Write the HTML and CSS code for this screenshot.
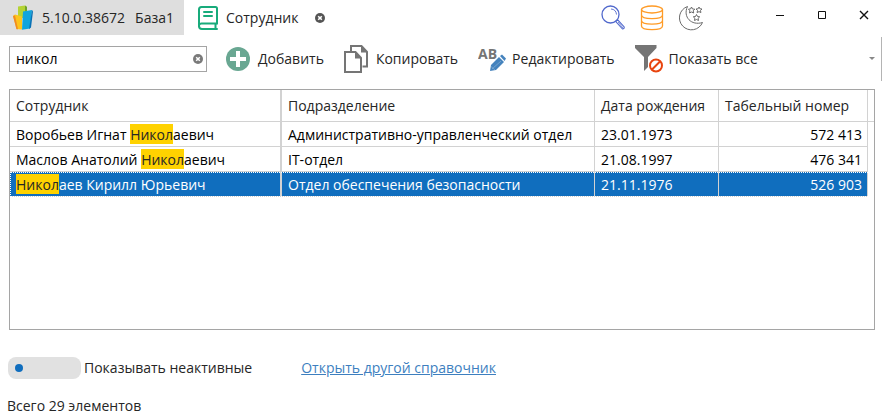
FILE: index.html
```html
<!DOCTYPE html>
<html lang="ru">
<head>
    <meta charset="UTF-8">
    <meta name="viewport" content="width=device-width, initial-scale=1.0">
    <title>Сотрудник</title>
    <link rel="stylesheet" href="styles.css">
</head>
<body>
    <header class="titlebar">
        <button class="tab tab-home">
            <svg width="24" height="26" viewBox="0 0 24 26" aria-hidden="true">
                <path d="M6 1.5 13 .5 15 2v11H6z" fill="#b5d334"/>
                <path d="M13 .5 15 2v10h-2z" fill="#6fa32c"/>
                <path d="M1 11 3 9.500 10 11.500V24.500L4.500 24z" fill="#fdc51b"/>
                <path d="M1 11 3 10.500 6 24.200H4.500z" fill="#f08a24"/>
                <path d="M11 6.500 20 5 18 23.500 10 24.800z" fill="#12a5dc"/>
                <path d="M20 5 21 6.500 19 22.500 17 24z" fill="#0871b5"/>
            </svg>
            <span>5.10.0.38672</span>
            <span>База1</span>
        </button>
        <div class="tab tab-active">
            <svg width="22" height="26" viewBox="0 0 22 26" fill="none" stroke="#18ab7b" stroke-width="2" stroke-linejoin="round" stroke-linecap="round" aria-hidden="true">
                <path d="M20 18.500V3.500A1.500 1.500 0 0 0 18.500 2H4.500A2.500 2.500 0 0 0 2 4.500V21a3 3 0 0 0 3 3h15"/>
                <path d="M2 21a2.500 2.500 0 0 1 3-2.500h15M18.500 18.500V24"/>
                <path d="M7 7h8M7 11h8"/>
            </svg>
            <span>Сотрудник</span>
            <button class="clear" aria-label="Закрыть вкладку">
                <svg width="10" height="10" viewBox="0 0 10 10">
                    <circle cx="5" cy="5" r="5" fill="#555"/>
                    <path d="M3.200 3.200 6.800 6.800M6.800 3.200 3.200 6.800" stroke="#fff" stroke-width="1.600"/>
                </svg>
            </button>
        </div>
        <div class="tools">
            <button aria-label="Поиск">
                <svg width="24" height="26" viewBox="0 0 24 26" fill="none" stroke="#5068cc">
                    <circle cx="9.500" cy="9.500" r="8.500" stroke-width="1.300"/>
                    <path d="M10 4a6 6 0 0 1 5.500 5.500" stroke-width=".9"/>
                    <path d="m14.800 16.500 1.900-1.700 6.500 7.200q.3 1.800-1.700 2z" stroke-width="1.100"/>
                    <path d="m17 17 5 6" stroke-width=".8"/>
                </svg>
            </button>
            <button aria-label="База данных">
                <svg width="24" height="26" viewBox="0 0 24 26" fill="none" stroke="#ff9b26" stroke-width="1.300">
                    <ellipse cx="12" cy="4.500" rx="10.500" ry="3.500"/>
                    <path d="M1.500 4.500v16.500c0 4.700 21 4.700 21 0V4.500M1.500 10c0 4.700 21 4.700 21 0M1.500 15.500c0 4.700 21 4.700 21 0"/>
                </svg>
            </button>
            <button aria-label="Тёмная тема">
                <svg width="24" height="26" viewBox="0 0 24 26" fill="none" stroke="#6b6b6b" stroke-linejoin="round">
                    <path d="M8.500 1.500A12 12 0 1 0 23.500 17.500C12.500 21 3.500 12 8.500 1.500z"/>
                    <path d="m12.500 2 1 2 2.300.2-1.600 1.600.5 2.200-2.200-1-2 1 .4-2.200L9.500 4.200l2.100-.3z"/>
                    <path d="m20 2 .9 1.800 2.100.2-1.500 1.500.4 2.100-1.900-1-1.900 1 .4-2.100L17 4l2.100-.2z"/>
                    <path d="m17.500 9.500 1 2 2.200.3-1.600 1.500.4 2.200-2-1-2 1 .4-2.200-1.600-1.500 2.200-.3z"/>
                </svg>
            </button>
        </div>
        <div class="window-buttons">
            <button aria-label="Свернуть">
                <svg width="10" height="10" viewBox="0 0 10 10"><path d="M1 5.500h8" stroke="#111"/></svg>
            </button>
            <button aria-label="Развернуть">
                <svg width="10" height="10" viewBox="0 0 10 10"><path d="M1.500 1.500h7v7h-7z" fill="none" stroke="#111"/></svg>
            </button>
            <button aria-label="Закрыть">
                <svg width="10" height="10" viewBox="0 0 10 10"><path d="m1 1 8 8M9 1 1 9" stroke="#111" stroke-width="1.400"/></svg>
            </button>
        </div>
    </header>

    <div class="toolbar">
        <div class="search">
            <input type="text" value="никол" aria-label="Поиск сотрудника">
            <button class="clear" aria-label="Очистить">
                <svg width="10" height="10" viewBox="0 0 10 10">
                    <circle cx="5" cy="5" r="5" fill="#7a7a7a"/>
                    <path d="M3.200 3.200 6.800 6.800M6.800 3.200 3.200 6.800" stroke="#fff" stroke-width="1.500"/>
                </svg>
            </button>
        </div>
        <button class="action">
            <svg width="24" height="28" viewBox="0 0 24 28">
                <circle cx="12" cy="14" r="12" fill="#69a792"/>
                <path d="M12 6v16M4 14h16" stroke="#fff" stroke-width="4"/>
            </svg>
            Добавить
        </button>
        <button class="action">
            <svg width="24" height="28" viewBox="0 0 24 28" fill="none" stroke="#757575" stroke-width="2">
                <path d="M7 6.500V1h10.500L23 7v14.500h-4.500"/>
                <path d="M17 1v6.500h6z" fill="#757575" stroke="none"/>
                <path d="M1 7h10.500L17 13v14H1z" fill="#fff"/>
                <path d="M11 7v6.500h6z" fill="#757575" stroke="none"/>
            </svg>
            Копировать
        </button>
        <button class="action wide-icon">
            <svg width="28" height="28" viewBox="0 0 28 28">
                <text x="0" y="14" class="icon-text">AB</text>
                <path d="m12 26 1-6 8-8 5 5-8 8z" fill="#4583bd"/>
                <path d="m22 11 2-1.500 4 4-1.500 2.500z" fill="#4583bd"/>
                <path d="m12.500 21 4.500 4M14 24l9-8" stroke="#fff" stroke-width=".5" opacity=".5"/>
            </svg>
            Редактировать
        </button>
        <button class="action wide-icon">
            <svg width="28" height="28" viewBox="0 0 28 28">
                <path d="M0 0h21.500v3L13 12v10l-4 4V12L0 3z" fill="#757575"/>
                <circle cx="21" cy="20.500" r="7.500" fill="#fff"/>
                <circle cx="21" cy="20.500" r="6" fill="#fff" stroke="#e8440f" stroke-width="2"/>
                <path d="m17 24.500 8-8" stroke="#e8440f" stroke-width="2"/>
            </svg>
            Показать все
        </button>
        <button class="more" aria-label="Ещё">
            <svg width="6" height="4" viewBox="0 0 6 4"><path d="M0 0h6L3 3z" fill="#888"/></svg>
        </button>
    </div>

    <main class="grid">
        <table>
            <colgroup>
                <col class="col-name">
                <col class="col-department">
                <col class="col-date">
                <col class="col-number">
                <col class="col-rest">
            </colgroup>
            <thead>
                <tr>
                    <th>Сотрудник</th>
                    <th>Подразделение</th>
                    <th>Дата рождения</th>
                    <th>Табельный номер</th>
                    <td></td>
                </tr>
            </thead>
            <tbody>
                <tr>
                    <td>Воробьев Игнат <mark>Никол</mark>аевич</td>
                    <td>Административно-управленческий отдел</td>
                    <td>23.01.1973</td>
                    <td class="number">572 413</td>
                </tr>
                <tr>
                    <td>Маслов Анатолий <mark>Никол</mark>аевич</td>
                    <td>IT-отдел</td>
                    <td>21.08.1997</td>
                    <td class="number">476 341</td>
                </tr>
                <tr class="selected">
                    <td><mark>Никол</mark>аев Кирилл Юрьевич</td>
                    <td>Отдел обеспечения безопасности</td>
                    <td>21.11.1976</td>
                    <td class="number">526 903</td>
                </tr>
            </tbody>
        </table>
    </main>

    <div class="options">
        <label class="inactive"><input type="checkbox" class="switch">Показывать неактивные</label>
        <a href="#">Открыть другой справочник</a>
    </div>
    <footer class="status">Всего 29 элементов</footer>
</body>
</html>
```

FILE: styles.css
```css
* {
    box-sizing: border-box;
}
body {
    display: flex;
    flex-direction: column;
    min-height: 100vh;
    margin: 0;
    background-color: #fff;
    color: #262626;
    font-family: "Open Sans", "Noto Sans", sans-serif;
    font-size: 14px;
    line-height: 20px;
}
button {
    padding: 0;
    border: none;
    background: none;
    color: inherit;
    font: inherit;
    cursor: pointer;
}
svg {
    display: block;
    flex-shrink: 0;
}
.titlebar {
    display: flex;
    height: 35px;
}
.tab {
    display: flex;
    align-items: center;
}
.tab-home {
    gap: 10px;
    padding: 0 10px 0 12px;
    background-color: #dedede;
}
.tab-home svg {
    margin-right: -4px;
}
.tab-active {
    gap: 7px;
    padding-left: 13px;
}
.tab-active .clear {
    margin-left: 10px;
}
.tools {
    display: flex;
    align-items: center;
    gap: 15px;
    margin-left: auto;
}
.window-buttons {
    display: flex;
    align-items: flex-start;
    gap: 32px;
    padding: 10px 15px 0 72px;
}
.toolbar {
    display: flex;
    align-items: center;
    height: 44px;
    margin: 2px 2px 8px 9px;
    border-right: 1px solid #b4b4b4;
}
.search {
    display: flex;
    align-items: center;
    width: 198px;
    height: 26px;
    margin-right: 19px;
    padding: 0 3px 0 6px;
    border: 1px solid #a5a5a5;
}
.search input {
    flex: 1;
    min-width: 0;
    padding: 0;
    border: none;
    outline: none;
    color: #000;
    font: inherit;
}
.action {
    display: flex;
    align-items: center;
    gap: 8px;
    margin-right: 20px;
    white-space: nowrap;
}
.wide-icon {
    gap: 6px;
}
.icon-text {
    fill: #757575;
    font-size: 14px;
    font-weight: bold;
}
.more {
    margin-left: auto;
    padding: 4px 6px;
}
.grid {
    flex: 1;
    margin: 0 9px;
    border: 1px solid #a5a5a5;
}
table {
    width: 100%;
    border-collapse: separate;
    border-spacing: 0;
    table-layout: fixed;
}
.col-name {
    width: 272px;
}
.col-date {
    width: 124px;
}
.col-number {
    width: 149px;
}
.col-rest {
    width: 6px;
}
th,
td {
    height: 25px;
    padding: 2px 4px 0 6px;
    border-right: 1px solid #d2d2d2;
    border-bottom: 1px solid #d2d2d2;
    font-weight: normal;
    text-align: left;
    white-space: nowrap;
}
th {
    height: 32px;
    padding-top: 0;
}
th:first-child,
td:first-child {
    border-right-width: 2px;
}
thead td {
    padding: 0;
    border-right: none;
}
tbody {
    color: #000;
}
.number {
    padding-right: 5px;
    text-align: right;
}
mark {
    padding-top: 1px;
    background-color: #ffd200;
    color: #262626;
}
.selected {
    background-color: #106ebe;
    color: #fff;
    outline: 1px dotted #fff;
    outline-offset: -1px;
}
.options {
    display: flex;
    align-items: center;
    gap: 49px;
    margin: 27px 8px 0;
}
.inactive {
    display: flex;
    align-items: center;
    gap: 3px;
}
.switch {
    display: flex;
    align-items: center;
    width: 73px;
    height: 22px;
    margin: 0;
    padding: 0 7px;
    border-radius: 8px;
    background-color: #e1e1e1;
    appearance: none;
}
.switch::before {
    width: 8px;
    height: 8px;
    border-radius: 50%;
    background-color: #106ebe;
    content: "";
}
.switch:checked {
    justify-content: flex-end;
}
a {
    color: #3d7fbf;
}
.status {
    padding: 17px 7px 4px;
}
```
